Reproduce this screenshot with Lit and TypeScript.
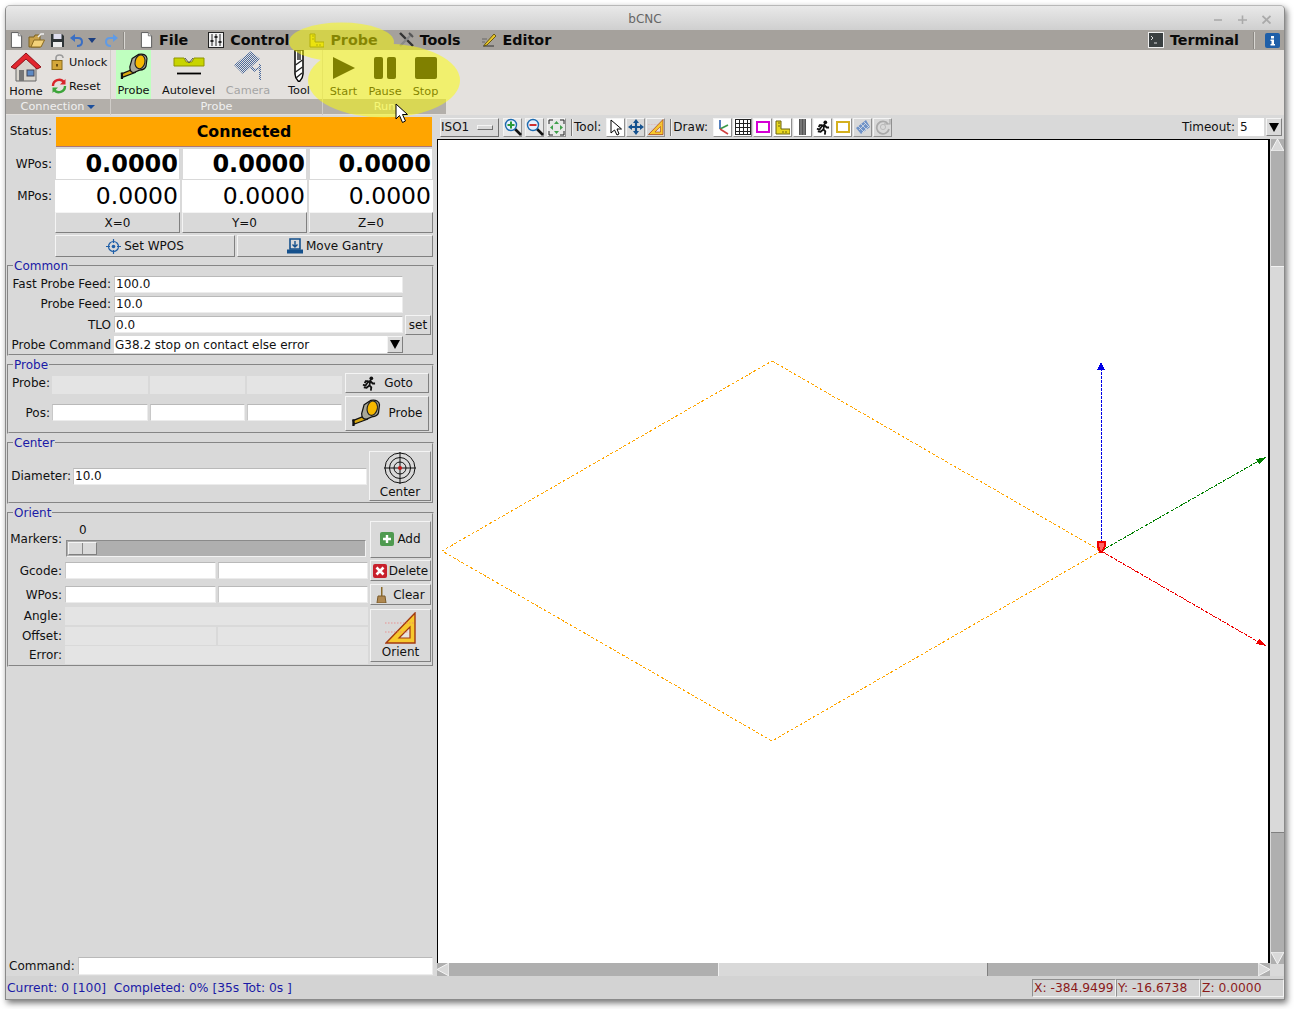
import { LitElement, html, css, svg } from "lit";
import { customElement } from "lit/decorators.js";

const ic = (w: number, h: number, vb: string, body: unknown) =>
  html`<svg class="ic" width=${w} height=${h} viewBox=${vb}>${body}</svg>`;

const tape = (w: number, h: number) =>
  ic(w, h, "0 0 30 28", svg`
    <path d="M1.5 22.5L15 17L16.5 21L3 26Z" fill="#d8a810" stroke="#111" stroke-width="1.3"/>
    <path d="M2 21V28" stroke="#111" stroke-width="2.4"/>
    <path d="M13 6L20 1.5Q28.5 .3 29 6L28 14Q27 18 21 18.5L15 21Q10.5 21 10.5 15Z" fill="#a8a89a" stroke="#111" stroke-width="1.3"/>
    <ellipse cx="21.5" cy="9.5" rx="5.3" ry="7.5" transform="rotate(12 21.5 9.5)" fill="#f5b800" stroke="#222" stroke-width="1.2"/>`);

const docIcon = (w: number, h: number) =>
  ic(w, h, "0 0 14 17", svg`
    <path d="M1.5 .5H9L12.5 4V16.5H1.5Z" fill="#fff" stroke="#555"/>
    <path d="M9 .5V4H12.5" fill="#ddd" stroke="#777"/>`);

const runner = (w: number, h: number) =>
  ic(w, h, "0 0 16 16", svg`
    <circle cx="11" cy="2.5" r="2" fill="#111"/>
    <path d="M2 9.5L5 10L7 7L10 5L9 10L11 12L10.5 15.5M9 10L6 12.5L3 12M10 5.5L12.5 8L15 8M8 5.5L5 5.5L4 7.5" fill="none" stroke="#111" stroke-width="1.9"/>`);

const triangleRuler = (w: number, h: number) =>
  ic(w, h, "0 0 32 32", svg`
    <path d="M30 1V31H1Z" fill="#f7c92e" stroke="#a23a10" stroke-width="1.4"/>
    <path d="M25 15V26H14Z" fill="#e8e4de" stroke="#a23a10" stroke-width="1.2"/>
    <path d="M0 11H30M0 20H24" stroke="#e77" stroke-width=".7" stroke-dasharray="1.5 1.5"/>`);

const endmill = (w: number, h: number) =>
  ic(w, h, "0 0 10 32", svg`
    <path d="M1 0V24Q1 28 5 32Q9 28 9 24V0Z" fill="#fff" stroke="#000" stroke-width="1.5"/>
    <path d="M4 0V10M6 0V10M1.5 15L8.5 10M1.5 22L8.5 17M2 28L8 23" stroke="#222" stroke-width="1.4"/>`);

const lens = (sign: unknown, color: string) =>
  ic(18, 18, "0 0 18 18", svg`
    <path d="M10 10L17 17" stroke="#111" stroke-width="2.6"/>
    <circle cx="7" cy="7" r="5.5" fill="#e8f2ff" stroke=${color} stroke-width="1.4"/>
    ${sign}`);

@customElement("app-root")
export class AppRoot extends LitElement {
  static styles = css`
    :host {
      display: block;
      box-sizing: border-box;
      width: 1294px;
      height: 1009px;
      padding: 5px 0 0 5px;
      background: #fff;
      font-family: "DejaVu Sans", sans-serif;
      font-size: 12px;
      color: #111;
    }
    * { box-sizing: border-box; }
    .ic { display: block; flex: none; }
    .window {
      position: relative;
      width: 1280px;
      height: 995px;
      display: flex;
      flex-direction: column;
      background: #d9d9d9;
      border: 1px solid #8a8a8a;
      border-top-color: #b8b8b8;
      border-radius: 5px 5px 0 0;
      box-shadow: 2px 3px 6px rgba(0, 0, 0, .55);
    }
    .title {
      height: 24px;
      flex: none;
      display: flex;
      align-items: center;
      justify-content: center;
      position: relative;
      padding-top: 2px;
      background: linear-gradient(#e9e9e9, #cfcfcf);
      color: #666;
      border-radius: 4px 4px 0 0;
    }
    .wm {
      position: absolute;
      right: 13px;
      top: 9px;
      display: flex;
      gap: 15px;
    }
    .menu {
      height: 20px;
      flex: none;
      display: flex;
      align-items: center;
      background: #a5a19c;
      padding-left: 4px;
      font-weight: bold;
      font-size: 14.3px;
      color: #0a0a0a;
    }
    .quick { display: flex; align-items: center; gap: 5px; margin-right: 15px; }
    .redo { margin-left: 4px; }
    .sep { width: 2px; height: 17px; background: #d8d6d2; border-left: 1px solid #8b8883; }
    .mi { display: flex; align-items: center; gap: 6px; margin-right: 20px; }
    .push { margin-left: auto; }
    .menu .sep.r { margin: 0 10px 0 -6px; }
    .info { margin-right: 4px; }
    .ribbon {
      height: 65px;
      flex: none;
      display: flex;
      background: #e4e1de;
    }
    .group {
      display: flex;
      flex-direction: column;
      border-right: 1px solid #cfccc8;
    }
    .g-conn { width: 105px; }
    .g-probe { width: 212px; }
    .g-run { width: 123px; border-right: none; }
    .g-body { height: 49px; display: flex; }
    .g-label {
      height: 15px;
      background: #b3afaa;
      color: #f0f0f0;
      font-size: 11.3px;
      text-align: center;
      line-height: 16px;
    }
    .caret {
      display: inline-block;
      border: 4px solid transparent;
      border-top: 4px solid #1c4f9c;
      border-bottom: 0;
      vertical-align: 1px;
      margin-left: 3px;
    }
    .rb {
      display: flex;
      flex-direction: column;
      align-items: center;
      justify-content: flex-end;
      font-size: 11.3px;
      padding-bottom: 2px;
      gap: 2px;
    }
    .home { width: 40px; padding-bottom: 1px; }
    .smalls { display: flex; flex-direction: column; gap: 8px; padding: 4px 0 0 5px; }
    .sm { display: flex; align-items: center; gap: 2px; font-size: 11.3px; height: 16px; }
    .g-probe .g-body { padding-left: 5px; gap: 11px; }
    .b-probe { width: 35px; background: #bfffbf; }
    .b-auto { width: 53px; }
    .b-cam { width: 44px; color: #a5a5a5; }
    .b-tool { width: 24px; margin-left: 6px; }
    .g-run .g-body { padding-left: 7px; gap: 11px; }
    .b-start { width: 27px; }
    .b-pause { width: 34px; }
    .b-stop { width: 25px; }
    .rb .fix { flex: 1; display: flex; align-items: center; justify-content: center; }
    .rb.run { gap: 0; padding-bottom: 1px; color: #000; }

    .main { flex: 1; min-height: 0; display: flex; }
    .left { width: 430px; flex: none; display: flex; flex-direction: column; }
    .dro {
      display: grid;
      grid-template-columns: 47px 125px 125px 124px;
      grid-template-rows: 34px 31px 32px 21px;
      column-gap: 2px;
    }
    .lb { display: flex; align-items: center; justify-content: flex-end; white-space: nowrap; }
    .dro .lb { padding: 0 1px 2px 0; }
    .dro .lb.mp { padding-bottom: 1px; }
    .state {
      grid-column: span 3;
      margin: 2px 1px 2px 1px;
      background: #ffa500;
      border-bottom: 1px solid #a77;
      display: flex;
      align-items: center;
      justify-content: center;
      font-weight: bold;
      font-size: 15.8px;
      color: #000;
    }
    .num {
      background: #fff;
      margin: 0 1px;
      display: flex;
      align-items: center;
      justify-content: flex-end;
      padding-right: 1px;
      font-size: 24px;
      color: #000;
    }
    .num.b { font-weight: bold; margin-bottom: 1px; }
    .num.m { margin: 0; padding: 0 2px 1px 0; font-size: 23.5px; }
    .btn {
      background: #d9d9d9;
      border: 1px solid;
      border-color: #f4f4f4 #808080 #808080 #f4f4f4;
      display: flex;
      align-items: center;
      justify-content: center;
      gap: 3px;
      white-space: nowrap;
    }
    .set2 {
      display: grid;
      grid-template-columns: 180px 196px;
      gap: 2px;
      height: 22px;
      margin: 2px 0 2px 49px;
    }
    fieldset {
      margin: 0 0 2px 1px;
      padding: 0;
      width: 427px;
      border: 2px groove #d9d9d9;
      min-width: 0;
    }
    legend {
      padding: 0 1px;
      margin: 0 0 -1px 4px;
      line-height: 14px;
      height: 14px;
      color: #1a1aa6;
    }
    input {
      display: block;
      width: 100%;
      height: 17px;
      padding: 0 1px;
      margin: 0;
      border: 1px solid #ececec;
      border-top-color: #b9b9b9;
      border-left-color: #c8c8c8;
      border-radius: 0;
      background: #fff;
      font: inherit;
      color: #111;
      outline: none;
    }
    .cell { height: 18px; background: #e4e4e4; }
    .common {
      display: grid;
      grid-template-columns: 103px 289px 26px;
      grid-template-rows: 20px 20px 21px 19px;
      column-gap: 2px;
      align-items: center;
      padding-top: 2px;
    }
    .common .lb { padding-right: 1px; }
    .wide { grid-column: span 2; }
    .combo { display: grid; grid-template-columns: 273px 16px; height: 17px; }
    .combo input { border: none; height: 17px; }
    .arrow {
      display: flex;
      align-items: center;
      justify-content: center;
      background: #d9d9d9;
      border: 1px solid;
      border-color: #f4f4f4 #808080 #808080 #f4f4f4;
    }
    .arrow i {
      display: block;
      border: 5px solid transparent;
      border-top: 9px solid #000;
      border-bottom: 0;
    }
    .set { height: 20px; }
    .probe {
      display: grid;
      grid-template-columns: 41px 96px 95px 95px 85px;
      grid-template-rows: 23px 37px;
      column-gap: 2px;
      align-items: center;
      padding-bottom: 1px;
    }
    .probe .bt1 { margin: 2px 0 1px 1px; height: 20px; gap: 8px; }
    .probe .bt2 { margin: 2px 0 0 1px; height: 35px; gap: 7px; padding-bottom: 2px; }
    .probe .end { align-self: end; }
    .center {
      display: grid;
      grid-template-columns: 62px 294px 62px;
      grid-template-rows: 52px;
      column-gap: 2px;
      align-items: center;
      padding-bottom: 1px;
    }
    .center .lb, .center input { margin-top: 2px; }
    .tall {
      flex-direction: column;
      gap: 1px;
      align-self: stretch;
      margin-top: 2px;
      padding-bottom: 1px;
    }
    .orient {
      display: grid;
      grid-template-columns: 54px 151px 150px 61px;
      grid-template-rows: 39px 25px 23px 20px 19px 19px;
      column-gap: 2px;
      align-items: center;
      padding-bottom: 1px;
    }
    .orient .lb { padding-right: 1px; }
    .scale { grid-column: span 2; align-self: stretch; display: flex; flex-direction: column; padding-left: 1px; }
    .scale span { height: 21px; padding: 4px 0 0 13px; line-height: 14px; }
    .trough {
      height: 17px;
      width: 300px;
      background: #afafaf;
      border: 1px solid;
      border-color: #8a8a8a #f2f2f2 #f2f2f2 #8a8a8a;
      padding: 1px;
    }
    .thumb {
      width: 29px;
      height: 13px;
      display: grid;
      grid-template-columns: 1fr 1fr;
      background: #d9d9d9;
      border: 1px solid;
      border-color: #f4f4f4 #808080 #808080 #f4f4f4;
    }
    .thumb i { display: block; border-right: 1px solid #888; }
    .thumb i:last-child { border: none; }
    .b-add { align-self: stretch; margin-top: 2px; padding-bottom: 2px; }
    .b-del { align-self: stretch; margin: 2px 0; gap: 2px; }
    .b-clr { align-self: stretch; margin: 1px 0; gap: 2px; }
    .b-or { grid-row: span 3; align-self: stretch; margin: 3px 0 2px; flex-direction: column; gap: 1px; }
    .spacer { flex: 1; }
    .cmd {
      height: 20px;
      display: grid;
      grid-template-columns: 66px 355px;
      align-items: center;
      margin: 0 0 0 3px;
      column-gap: 3px;
    }
    .cmd .lb { justify-content: flex-start; }
    .cmd input { height: 18px; }

    .right { flex: 1; min-width: 0; display: flex; flex-direction: column; padding-left: 1px; }
    .tools {
      height: 24px;
      flex: none;
      display: flex;
      align-items: center;
      padding: 0 2px 0 3px;
    }
    .iso {
      width: 59px;
      height: 19px;
      display: flex;
      align-items: center;
      justify-content: space-between;
      padding: 0 5px 0 0;
      margin-right: 4px;
      background: #d9d9d9;
      border: 1px solid;
      border-color: #f4f4f4 #707070 #707070 #f4f4f4;
    }
    .iso i {
      display: block;
      width: 16px;
      height: 5px;
      background: #d9d9d9;
      border: 1px solid;
      border-color: #f4f4f4 #707070 #707070 #f4f4f4;
    }
    .tb {
      width: 19px;
      height: 19px;
      margin-right: 1px;
      display: flex;
      align-items: center;
      justify-content: center;
      background: #e8e8e8;
      border: 1px solid;
      border-color: #f4f4f4 #909090 #909090 #f4f4f4;
      flex: none;
    }
    .tb.z { margin-right: 3px; }
    .tb.flat { background: #d9d9d9; }
    .tb.w { background: #fff; }
    .vsep {
      width: 2px;
      height: 17px;
      margin: 0 1px 0 4px;
      border-left: 1px solid #777;
      border-right: 1px solid #f0f0f0;
    }
    .tlabel { margin-right: 5px; }
    .tools .timeout { margin-left: auto; margin-right: 3px; }
    .tools input { width: 26px; height: 18px; border: none; padding-left: 2px; }
    .tools .arrow { width: 16px; height: 18px; margin-left: 2px; }
    .view { flex: 1; min-height: 0; display: flex; gap: 1px; }
    .canvas {
      width: 833px;
      background: #fff;
      border: 1px solid #000;
      border-width: 1px 2px 1px 1px;
      height: 825px;
    }
    .canvas svg { display: block; }
    .sb { background: #afafaf; display: flex; position: relative; }
    .sb.v { width: 13px; flex-direction: column; height: 825px; }
    .sb.h { height: 13px; width: 833px; }
    .sb.v .slider { height: 567px; margin-top: 127px; width: 13px; border-top: 1px solid #f2f2f2; border-bottom: 1px solid #808080; }
    .sb.h .slider { width: 270px; margin-left: 281px; height: 13px; border-left: 1px solid #f2f2f2; border-right: 1px solid #808080; }
    .slider { background: #d9d9d9; }
    .tri { position: absolute; }
    .tri.up { top: 0; left: 0; }
    .tri.down { bottom: 0; left: 0; }
    .tri.l { left: 0; top: 0; }
    .tri.r { right: 0; top: 0; }

    .status {
      height: 23px;
      flex: none;
      display: flex;
      align-items: center;
      background: #d3d3d3;
      padding: 0 0 0 1px;
      font-size: 12.3px;
      color: #1a1aa6;
      white-space: pre;
    }
    .pos {
      width: 84px;
      height: 18px;
      display: flex;
      align-items: center;
      padding-left: 1px;
      color: #8b1a1a;
      border: 1px solid;
      border-color: #8f8f8f #f2f2f2 #f2f2f2 #8f8f8f;
    }
    .pos.first { margin-left: auto; }

    .overlay { position: absolute; pointer-events: none; }
    .marker { left: 0; top: 0; }
    .cursor { left: 389px; top: 97px; }
  `;

  private ribbon() {
    return html`<div class="ribbon">
      <div class="group g-conn">
        <div class="g-body">
          <div class="rb home">
            <div class="fix">
              ${ic(32, 30, "0 0 32 30", svg`
                <path d="M6 14V29H26V14L16 5Z" fill="#d8d4cc" stroke="#666"/>
                <path d="M1 15L16 1L31 15L27 17L16 7L5 17Z" fill="#e3262e" stroke="#8e1218"/>
                <rect x="9" y="18" width="5" height="11" fill="#777"/>
                <rect x="17" y="18" width="7" height="6" fill="#5d8ac4" stroke="#445"/>`)}
            </div>
            Home
          </div>
          <div class="smalls">
            <div class="sm">
              ${ic(16, 16, "0 0 16 16", svg`
                <path d="M5 7V4Q5 1 8.5 1T12 4" fill="none" stroke="#999" stroke-width="1.6"/>
                <rect x="1" y="6.5" width="10" height="9" fill="#d4a73a" stroke="#8a6a1a"/>
                <rect x="5" y="10" width="2" height="2.5" fill="#6b4e10"/>`)}
              Unlock
            </div>
            <div class="sm">
              ${ic(16, 16, "0 0 16 16", svg`
                <path d="M2 8A6 6 0 0 1 13 4.5" fill="none" stroke="#d9262c" stroke-width="2.4"/>
                <path d="M14.5 1V6.5H9Z" fill="#d9262c"/>
                <path d="M14 8A6 6 0 0 1 3 11.5" fill="none" stroke="#3da53a" stroke-width="2.4"/>
                <path d="M1.5 15V9.5H7Z" fill="#3da53a"/>`)}
              Reset
            </div>
          </div>
        </div>
        <div class="g-label">Connection<span class="caret"></span></div>
      </div>
      <div class="group g-probe">
        <div class="g-body">
          <div class="rb b-probe"><div class="fix">${tape(28, 26)}</div>Probe</div>
          <div class="rb b-auto">
            <div class="fix">
              ${ic(32, 22, "0 0 32 22", svg`
                <path d="M1 3H11L13 7H19L21 3H31V11H1Z" fill="#c8d400" stroke="#8f9400"/>
                <path d="M12 3L16 8L20 3" fill="none" stroke="#555"/>
                <path d="M4 18.5H28" stroke="#000" stroke-width="1.8"/>`)}
            </div>
            Autolevel
          </div>
          <div class="rb b-cam">
            <div class="fix">
              ${ic(30, 32, "0 0 30 32", svg`
                <defs>
                  <pattern id="dith" width="2" height="2" patternUnits="userSpaceOnUse">
                    <rect width="1" height="1" fill="#4b6a9c"/>
                    <rect x="1" y="1" width="1" height="1" fill="#4b6a9c"/>
                  </pattern>
                </defs>
                <path d="M1 15L18 1L27 9L10 24Z" fill="url(#dith)"/>
                <path d="M17 18L21 22L26 19V30H28V14H26V17L22 19L19 16Z" fill="url(#dith)"/>`)}
            </div>
            Camera
          </div>
          <div class="rb b-tool"><div class="fix">${endmill(10, 32)}</div>Tool</div>
        </div>
        <div class="g-label">Probe</div>
      </div>
      <div class="group g-run">
        <div class="g-body">
          <div class="rb run b-start">
            <div class="fix">
              ${ic(22, 22, "0 0 22 22", svg`<path d="M0 0L22 11L0 22Z" fill="#000"/>`)}
            </div>
            Start
          </div>
          <div class="rb run b-pause">
            <div class="fix">
              ${ic(22, 22, "0 0 22 22", svg`
                <rect width="9" height="22" rx="2" fill="#000"/>
                <rect x="13" width="9" height="22" rx="2" fill="#000"/>`)}
            </div>
            Pause
          </div>
          <div class="rb run b-stop">
            <div class="fix">
              ${ic(22, 22, "0 0 22 22", svg`<rect width="22" height="22" rx="2" fill="#000"/>`)}
            </div>
            Stop
          </div>
        </div>
        <div class="g-label">Run</div>
      </div>
    </div>`;
  }

  private menu() {
    return html`<div class="menu">
      <div class="quick">
        ${docIcon(13, 16)}
        ${ic(17, 15, "0 0 17 15", svg`
          <path d="M1 4H6L7 2H12V14H1Z" fill="#c9a24a" stroke="#7a6020"/>
          <path d="M3 14L6 7H16.5L13 14Z" fill="#f3d27a" stroke="#8a6a20"/>
          <path d="M10 4L13 1L16 1" fill="none" stroke="#eee" stroke-width="1.5"/>`)}
        ${ic(15, 15, "0 0 15 15", svg`
          <path d="M1 1H12L14 3V14H1Z" fill="#2e3436"/>
          <rect x="3.5" y="1" width="8" height="5" fill="#dde"/>
          <rect x="3" y="9" width="9" height="5" fill="#eee"/>`)}
        ${ic(13, 13, "0 0 13 13", svg`
          <path d="M3 4H8Q12 4 12 8T7 12" fill="none" stroke="#3a6fc4" stroke-width="2"/>
          <path d="M5 0V8L0 4Z" fill="#3a6fc4"/>`)}
        ${ic(8, 5, "0 0 8 5", svg`<path d="M0 0H8L4 5Z" fill="#1c3f80"/>`)}
        <span class="redo">
          ${ic(13, 13, "0 0 13 13", svg`
            <path d="M10 4H5Q1 4 1 8T6 12" fill="none" stroke="#5f9be6" stroke-width="2"/>
            <path d="M8 0V8L13 4Z" fill="#5f9be6"/>`)}
        </span>
        <span class="sep"></span>
      </div>
      <div class="mi">${docIcon(13, 16)}File</div>
      <div class="mi">
        ${ic(16, 16, "0 0 16 16", svg`
          <rect x=".5" y=".5" width="15" height="15" fill="#f2f2f2" stroke="#222"/>
          <path d="M4 2V14M8 2V14M12 2V14" stroke="#222"/>
          <path d="M2.5 9H5.5M6.5 5H9.5M10.5 10H13.5" stroke="#222" stroke-width="2"/>`)}
        Control
      </div>
      <div class="mi">
        ${ic(15, 15, "0 0 15 15", svg`
          <path d="M1 1H6V9H15V14H1Z" fill="#d8c81e" stroke="#6a6210"/>
          <path d="M3 3H5M3 6H5M8 11V13M11 11V13" stroke="#6a6210"/>`)}
        Probe
      </div>
      <div class="mi">
        ${ic(16, 16, "0 0 16 16", svg`
          <path d="M2 1L15 14" stroke="#333" stroke-width="2.4"/>
          <path d="M14 2L2 14" stroke="#888" stroke-width="2.4"/>
          <path d="M11 1L15 5" stroke="#555" stroke-width="2"/>`)}
        Tools
      </div>
      <div class="mi">
        ${ic(16, 16, "0 0 16 16", svg`
          <path d="M2 14H13" stroke="#333"/>
          <path d="M4 12L13 2L15 4L6 13L3 14Z" fill="#e8c52a" stroke="#6a5a10"/>
          <path d="M1 7H6M1 10H4" stroke="#666"/>`)}
        Editor
      </div>
      <div class="mi push">
        ${ic(16, 16, "0 0 16 16", svg`
          <rect x=".5" y=".5" width="15" height="15" fill="#3a3f40" stroke="#eee"/>
          <path d="M3 4L5 6L3 8M6 11H9" fill="none" stroke="#ddd"/>`)}
        Terminal
      </div>
      <span class="sep r"></span>
      <span class="info">
        ${ic(15, 15, "0 0 15 15", svg`
          <rect width="15" height="15" rx="2" fill="#1f5fa8"/>
          <path d="M6 3H9V5.5H6ZM5.5 6.5H9V11H10V12.5H5.5V11H6.5V8H5.5Z" fill="#fff"/>`)}
      </span>
    </div>`;
  }

  private panel() {
    return html`<div class="left">
      <div class="dro">
        <div class="lb">Status:</div>
        <div class="state">Connected</div>
        <div class="lb">WPos:</div>
        <div class="num b">0.0000</div>
        <div class="num b">0.0000</div>
        <div class="num b">0.0000</div>
        <div class="lb mp">MPos:</div>
        <div class="num m">0.0000</div>
        <div class="num m">0.0000</div>
        <div class="num m">0.0000</div>
        <div></div>
        <div class="btn">X=0</div>
        <div class="btn">Y=0</div>
        <div class="btn">Z=0</div>
      </div>
      <div class="set2">
        <div class="btn">
          ${ic(15, 15, "0 0 15 15", svg`
            <circle cx="7.5" cy="7.5" r="5" fill="none" stroke="#1f5fa8" stroke-width="1.2"/>
            <circle cx="7.5" cy="7.5" r="1.8" fill="#1f5fa8"/>
            <path d="M7.5 0V4M7.5 11V15M0 7.5H4M11 7.5H15" stroke="#1f5fa8" stroke-width="1.2"/>`)}
          Set WPOS
        </div>
        <div class="btn">
          ${ic(16, 16, "0 0 16 16", svg`
            <path d="M3 1H13V11H3Z" fill="none" stroke="#14508c" stroke-width="1.6"/>
            <path d="M8 3V9M5.5 6.5L8 9L10.5 6.5" fill="none" stroke="#14508c" stroke-width="1.4"/>
            <rect y="11.5" width="16" height="4" fill="#14508c"/>`)}
          Move Gantry
        </div>
      </div>

      <fieldset>
        <legend>Common</legend>
        <div class="common">
          <div class="lb">Fast Probe Feed:</div>
          <input value="100.0" readonly />
          <div></div>
          <div class="lb">Probe Feed:</div>
          <input value="10.0" readonly />
          <div></div>
          <div class="lb">TLO</div>
          <input value="0.0" readonly />
          <div class="btn set">set</div>
          <div class="lb">Probe Command</div>
          <div class="combo">
            <input value="G38.2 stop on contact else error" readonly />
            <div class="arrow"><i></i></div>
          </div>
        </div>
      </fieldset>

      <fieldset>
        <legend>Probe</legend>
        <div class="probe">
          <div class="lb">Probe:</div>
          <div class="cell end"></div>
          <div class="cell end"></div>
          <div class="cell end"></div>
          <div class="btn bt1">${runner(15, 15)}Goto</div>
          <div class="lb">Pos:</div>
          <input readonly />
          <input readonly />
          <input readonly />
          <div class="btn bt2">${tape(30, 27)}Probe</div>
        </div>
      </fieldset>

      <fieldset>
        <legend>Center</legend>
        <div class="center">
          <div class="lb">Diameter:</div>
          <input value="10.0" readonly />
          <div class="btn tall">
            ${ic(32, 32, "0 0 32 32", svg`
              <g fill="none" stroke="#111" stroke-width="1">
                <circle cx="16" cy="16" r="15"/>
                <circle cx="16" cy="16" r="10.5"/>
                <circle cx="16" cy="16" r="6"/>
                <path d="M16 0V32M0 16H32"/>
              </g>
              <circle cx="16" cy="16" r="2" fill="#c01818"/>`)}
            Center
          </div>
        </div>
      </fieldset>

      <fieldset>
        <legend>Orient</legend>
        <div class="orient">
          <div class="lb">Markers:</div>
          <div class="scale">
            <span>0</span>
            <div class="trough"><div class="thumb"><i></i><i></i></div></div>
          </div>
          <div class="btn b-add">
            ${ic(14, 14, "0 0 14 14", svg`
              <rect width="14" height="14" rx="2" fill="#4f9a50"/>
              <path d="M7 3V11M3 7H11" stroke="#fff" stroke-width="2.4"/>`)}
            Add
          </div>
          <div class="lb">Gcode:</div>
          <input readonly />
          <input readonly />
          <div class="btn b-del">
            ${ic(14, 14, "0 0 14 14", svg`
              <rect width="14" height="14" rx="2" fill="#c8202c"/>
              <path d="M3.5 3.5L10.5 10.5M10.5 3.5L3.5 10.5" stroke="#fff" stroke-width="2.6"/>`)}
            Delete
          </div>
          <div class="lb">WPos:</div>
          <input readonly />
          <input readonly />
          <div class="btn b-clr">
            ${ic(11, 16, "0 0 11 16", svg`
              <path d="M5 0H6.5V9H5Z" fill="#8a6a2a"/>
              <path d="M2 9H9L10 16H1Z" fill="#b08850" stroke="#7a5a2a"/>`)}
            <span>&nbsp;Clear</span>
          </div>
          <div class="lb">Angle:</div>
          <div class="cell wide"></div>
          <div class="btn b-or">${triangleRuler(32, 32)}Orient</div>
          <div class="lb">Offset:</div>
          <div class="cell"></div>
          <div class="cell"></div>
          <div class="lb">Error:</div>
          <div class="cell wide"></div>
        </div>
      </fieldset>

      <div class="spacer"></div>
      <div class="cmd">
        <div class="lb">Command:</div>
        <input readonly />
      </div>
    </div>`;
  }

  private toolbar() {
    return html`<div class="tools">
      <div class="iso">ISO1<i></i></div>
      <div class="tb z">
        ${lens(svg`<path d="M7 3.5V10.5M3.5 7H10.5" stroke="#2a9a3a" stroke-width="2"/>`, "#1d6bb0")}
      </div>
      <div class="tb z">
        ${lens(svg`<path d="M3.5 7H10.5" stroke="#d03030" stroke-width="2"/>`, "#1d6bb0")}
      </div>
      <div class="tb">
        ${ic(17, 17, "0 0 17 17", svg`
          <path d="M1 5V1H5M12 1H16V5M16 12V16H12M5 16H1V12" fill="none" stroke="#222"/>
          <path d="M8.5 2L11 5H6ZM8.5 15L11 12H6ZM2 8.5L5 6V11ZM15 8.5L12 6V11Z" fill="#3fa04a"/>`)}
      </div>
      <span class="vsep"></span>
      <span class="tlabel">Tool:</span>
      <div class="tb w">
        ${ic(14, 17, "0 0 14 17", svg`<path d="M2 1V14L5.5 11L8 16L10 15L8 10H12.5Z" fill="#fff" stroke="#000"/>`)}
      </div>
      <div class="tb flat">
        ${ic(16, 16, "0 0 16 16", svg`
          <path d="M8 0L11 4H5ZM8 16L11 12H5ZM0 8L4 5V11ZM16 8L12 5V11Z" fill="#15528f"/>
          <path d="M8 3V13M3 8H13" stroke="#15528f" stroke-width="2.2"/>`)}
      </div>
      <div class="tb flat">${triangleRuler(16, 16)}</div>
      <span class="vsep"></span>
      <span class="tlabel">Draw:</span>
      <div class="tb w">
        ${ic(14, 16, "0 0 14 16", svg`
          <path d="M4 1V10" stroke="#2a5fb0" stroke-width="1.6"/>
          <path d="M4 10L12 6" stroke="#3a9a4a" stroke-width="1.6"/>
          <path d="M4 10L12 15" stroke="#d04040" stroke-width="1.6"/>`)}
      </div>
      <div class="tb w">
        ${ic(16, 16, "0 0 16 16", svg`
          <path d="M.5 0V16M4.5 0V16M8.5 0V16M12.5 0V16M15.5 0V16M0 .5H16M0 4.5H16M0 8.5H16M0 12.5H16M0 15.5H16" stroke="#222"/>`)}
      </div>
      <div class="tb w">
        ${ic(14, 12, "0 0 14 12", svg`<rect x="1" y="1" width="12" height="10" fill="#fff" stroke="#d400d4" stroke-width="2"/>`)}
      </div>
      <div class="tb w">
        ${ic(15, 15, "0 0 15 15", svg`
          <path d="M1 1H6V9H15V14H1Z" fill="#e8d820" stroke="#6a6210"/>
          <path d="M3 3H5M3 6H5M8 11V13M11 11V13" stroke="#6a6210"/>`)}
      </div>
      <div class="tb w">
        ${ic(9, 16, "0 0 9 16", svg`
          <rect x="1" width="7" height="16" fill="#555"/>
          <path d="M3 0V16M6 0V16" stroke="#999"/>`)}
      </div>
      <div class="tb w">${runner(15, 15)}</div>
      <div class="tb w">
        ${ic(14, 12, "0 0 14 12", svg`<rect x="1" y="1" width="12" height="10" fill="#fff" stroke="#d4b020" stroke-width="2"/>`)}
      </div>
      <div class="tb flat">
        ${ic(16, 16, "0 0 16 16", svg`
          <path d="M1 9L11 1L15 8L6 15Z" fill="#6f93c8"/>
          <path d="M3 7L9 13M6 5L12 11M9 3L14 8M4 11L11 4M7 14L14 7" stroke="#e8e8e8" stroke-width=".7"/>`)}
      </div>
      <div class="tb flat">
        ${ic(16, 16, "0 0 16 16", svg`
          <path d="M13 5A6.2 6.2 0 1 0 14 10" fill="none" stroke="#aaa" stroke-width="1.8"/>
          <path d="M9 5H15V0" fill="none" stroke="#aaa" stroke-width="1.2"/>
          <circle cx="8" cy="8" r="2.6" fill="none" stroke="#bbb"/>`)}
      </div>
      <span class="timeout">Timeout:</span>
      <input value="5" readonly />
      <div class="arrow"><i></i></div>
    </div>`;
  }

  private canvas() {
    return html`<div class="canvas">
      <svg width="830" height="823" viewBox="438 140 830 823" shape-rendering="crispEdges">
        <path d="M772 361L1101 551L772 741L442 551Z" fill="none" stroke="#ffa500" stroke-dasharray="3 2"/>
        <path d="M1101 551V366" stroke="#0000e6" stroke-dasharray="3 1"/>
        <path d="M1101 362L1105 370H1097Z" fill="#0000e6"/>
        <path d="M1101 551L1262 459" stroke="#008000" stroke-dasharray="4 1"/>
        <path d="M1266 457L1256 459L1259 464Z" fill="#008000"/>
        <path d="M1101 551L1262 644" stroke="#f00000" stroke-dasharray="4 1"/>
        <path d="M1266 646L1259 639L1256 644Z" fill="#f00000"/>
        <path d="M1098 542H1105V546L1102 552H1100L1098 546Z" fill="#f66" stroke="#f00000" stroke-width="2"/>
      </svg>
    </div>`;
  }

  render() {
    return html`<div class="window">
      <div class="title">
        bCNC
        <div class="wm">
          ${ic(9, 9, "0 0 9 9", svg`<path d="M0 5H8" stroke="#aaa" stroke-width="1.6"/>`)}
          ${ic(9, 9, "0 0 9 9", svg`<path d="M0 5H9M4.5 .5V9" stroke="#aaa" stroke-width="1.6"/>`)}
          ${ic(9, 9, "0 0 9 9", svg`<path d="M.5 1L8.5 8.5M8.5 1L.5 8.5" stroke="#aaa" stroke-width="1.8"/>`)}
        </div>
      </div>
      ${this.menu()}
      ${this.ribbon()}
      <div class="main">
        ${this.panel()}
        <div class="right">
          ${this.toolbar()}
          <div class="view">
            ${this.canvas()}
            <div class="sb v">
              <svg class="tri up" width="13" height="12" viewBox="0 0 13 12"><path d="M0 12H13L6.5 0Z" fill="#d9d9d9" stroke="#f4f4f4"/></svg>
              <div class="slider"></div>
              <svg class="tri down" width="13" height="12" viewBox="0 0 13 12"><path d="M0 0H13L6.5 12Z" fill="#d9d9d9" stroke="#f4f4f4"/></svg>
            </div>
          </div>
          <div class="sb h">
            <svg class="tri l" width="12" height="13" viewBox="0 0 12 13"><path d="M12 0V13L0 6.5Z" fill="#d9d9d9" stroke="#f4f4f4"/></svg>
            <div class="slider"></div>
            <svg class="tri r" width="12" height="13" viewBox="0 0 12 13"><path d="M0 0V13L12 6.5Z" fill="#d9d9d9" stroke="#f4f4f4"/></svg>
          </div>
        </div>
      </div>
      <div class="status">Current: 0 [100]  Completed: 0% [35s Tot: 0s ]<div class="pos first">X: -384.9499</div><div class="pos">Y: -16.6738</div><div class="pos">Z: 0.0000</div></div>
      <svg class="overlay marker" width="500" height="130" viewBox="5 6 500 130">
        <g fill="#ff0" opacity=".5">
          <path d="M288 42A52.5 19.5 0 1 1 393 42A52.5 19.5 0 1 1 288 42Z"/>
          <path d="M307 80.5A76 37 0 1 1 459 80.5A76 37 0 1 1 307 80.5Z"/>
        </g>
      </svg>
      <svg class="overlay cursor" width="17" height="21" viewBox="0 0 17 21">
        <path d="M1 1V16L4.5 12.5L7.5 19.5L10.5 18L7.5 11.5H12.5Z" fill="#fff" stroke="#000"/>
      </svg>
    </div>`;
  }
}
